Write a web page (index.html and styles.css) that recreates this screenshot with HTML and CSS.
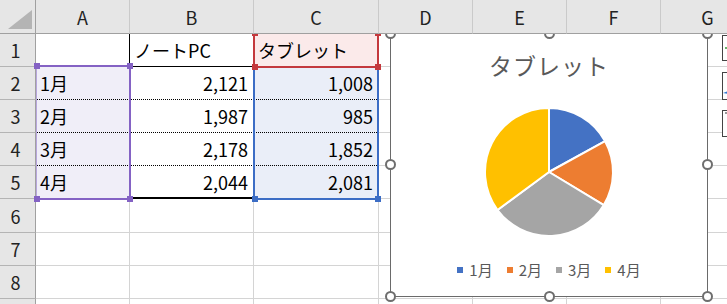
FILE: index.html
```html
<!DOCTYPE html>
<html lang="ja">
<head>
    <meta charset="UTF-8">
    <title>タブレット</title>
    <link rel="stylesheet" href="styles.css">
</head>
<body>
    <div class="sheet">
        <div class="grid">
            <div class="hd corner"></div>
            <div class="hd">A</div>
            <div class="hd">B</div>
            <div class="hd">C</div>
            <div class="hd">D</div>
            <div class="hd">E</div>
            <div class="hd">F</div>
            <div class="hd">G</div>

            <div class="rh">1</div>
            <div class="c a1"></div>
            <div class="c b1">ノートPC</div>
            <div class="c pink">タブレット</div>
            <div class="c"></div><div class="c"></div><div class="c"></div><div class="c"></div>

            <div class="rh">2</div>
            <div class="c lav dot">1月</div>
            <div class="c num dot">2,121</div>
            <div class="c num blue dot">1,008</div>
            <div class="c"></div><div class="c"></div><div class="c"></div><div class="c"></div>

            <div class="rh">3</div>
            <div class="c lav dot">2月</div>
            <div class="c num dot">1,987</div>
            <div class="c num blue dot">985</div>
            <div class="c"></div><div class="c"></div><div class="c"></div><div class="c"></div>

            <div class="rh">4</div>
            <div class="c lav dot">3月</div>
            <div class="c num dot">2,178</div>
            <div class="c num blue dot">1,852</div>
            <div class="c"></div><div class="c"></div><div class="c"></div><div class="c"></div>

            <div class="rh">5</div>
            <div class="c lav">4月</div>
            <div class="c num b5">2,044</div>
            <div class="c num blue">2,081</div>
            <div class="c"></div><div class="c"></div><div class="c"></div><div class="c"></div>

            <div class="rh">6</div>
            <div class="c"></div><div class="c"></div><div class="c"></div><div class="c"></div><div class="c"></div><div class="c"></div><div class="c"></div>
            <div class="rh">7</div>
            <div class="c"></div><div class="c"></div><div class="c"></div><div class="c"></div><div class="c"></div><div class="c"></div><div class="c"></div>
            <div class="rh">8</div>
            <div class="c"></div><div class="c"></div><div class="c"></div><div class="c"></div><div class="c"></div><div class="c"></div><div class="c"></div>
            <!-- row 9 is scrolled almost out of view -->
            <div class="rh"></div>
            <div class="c"></div><div class="c"></div><div class="c"></div><div class="c"></div><div class="c"></div><div class="c"></div><div class="c"></div>
        </div>

        <!-- selected ranges -->
        <div class="sel sel-a">
            <span class="hdl tl"></span><span class="hdl tr"></span>
            <span class="hdl bl"></span><span class="hdl br"></span>
        </div>
        <div class="sel sel-c2">
            <span class="hdl bl"></span><span class="hdl br"></span>
        </div>
        <div class="sel sel-c1">
            <span class="hdl tl"></span><span class="hdl tr"></span>
            <span class="hdl bl"></span><span class="hdl br"></span>
        </div>

        <!-- chart -->
        <div class="chart">
            <div class="chart-title">タブレット</div>
            <svg class="pie" width="316" height="160" viewBox="0 0 316 160">
                <g transform="translate(0,-49)" stroke="#fff" stroke-width="2" stroke-linejoin="round">
                    <path d="M158,139 L158,75 A64,64 0 0,1 214.1,108.2 Z" fill="#4472c4"/>
                    <path d="M158,139 L214.1,108.2 A64,64 0 0,1 212.8,172.04 Z" fill="#ed7d31"/>
                    <path d="M158,139 L212.8,172.04 A64,64 0 0,1 106.51,177 Z" fill="#a5a5a5"/>
                    <path d="M158,139 L106.51,177 A64,64 0 0,1 158,75 Z" fill="#ffc000"/>
                </g>
            </svg>
            <div class="legend">
                <span class="item"><i class="key k1"></i>1月</span>
                <span class="item"><i class="key k2"></i>2月</span>
                <span class="item"><i class="key k3"></i>3月</span>
                <span class="item"><i class="key k4"></i>4月</span>
            </div>
            <span class="ch t1"></span><span class="ch t2"></span><span class="ch t3"></span>
            <span class="ch m1"></span><span class="ch m3"></span>
            <span class="ch b1"></span><span class="ch b2"></span><span class="ch b3"></span>
        </div>

        <!-- chart side buttons -->
        <div class="tool tool-add">
            <svg width="26" height="24" viewBox="0 0 26 24"><path d="M2,12 H22 M12,2 V22" stroke="#3a9a3a" stroke-width="1.5"/></svg>
        </div>
        <div class="tool tool-style">
            <svg width="26" height="26" viewBox="0 0 26 26"><path d="M0,20 L5,18 L5,21 Z" fill="#2f77d0"/></svg>
        </div>
        <div class="tool tool-filter">
            <svg width="26" height="26" viewBox="0 0 26 26"><path d="M2,2 H12 L8,7 V12" fill="none" stroke="#333" stroke-width="1"/></svg>
        </div>
    </div>
</body>
</html>
```

FILE: styles.css
```css
* {
    margin: 0;
    padding: 0;
    box-sizing: border-box;
}

body {
    font-family: 'Noto Sans CJK JP', 'Noto Sans', sans-serif;
    background-color: #fff;
    color: #000;
    width: 727px;
    height: 304px;
    overflow: hidden;
}

.sheet {
    position: relative;
    width: 727px;
    height: 304px;
    overflow: hidden;
}

.grid {
    display: grid;
    grid-template-columns: 36px 94px 124px 125px 94px 94px 94px 94px;
    grid-template-rows: 34px repeat(5, 33px) 34px 33px 33px 33px;
    font-size: 18px;
}

.hd {
    position: relative;
    z-index: 5;
    display: flex;
    align-items: center;
    justify-content: center;
    background-color: #e6e6e6;
    color: #222;
    border-right: 1px solid #cacaca;
    border-bottom: 1px solid #a0a0a0;
}

.corner {
    border-right: 1px solid #a0a0a0;
}

.corner::after {
    content: "";
    position: absolute;
    left: 8px;
    top: 10px;
    width: 24px;
    height: 19px;
    background-color: #b4b4b4;
    clip-path: polygon(100% 0, 100% 100%, 0 100%);
}

.rh {
    display: flex;
    align-items: center;
    justify-content: center;
    padding-right: 4px;
    background-color: #e6e6e6;
    color: #222;
    border-right: 1px solid #a0a0a0;
    border-bottom: 1px solid #b4b4b4;
}

.c {
    display: flex;
    align-items: center;
    padding: 0 4px;
    white-space: nowrap;
    border-right: 1px solid #d4d4d4;
    border-bottom: 1px solid #d4d4d4;
}

.num {
    justify-content: flex-end;
    padding-right: 5px;
}

.a1 {
    border-right-color: #000;
}

.b1 {
    border-bottom-color: #000;
}

.dot {
    border-bottom: 1px dotted #000;
}

.b5 {
    border-bottom: 2px solid #000;
}

.lav {
    background-color: #f0eef8;
}

.pink {
    background-color: #fbeaea;
}

.blue {
    background-color: #eaeef8;
}

/* selection outlines */
.sel {
    position: absolute;
    z-index: 1;
    border: 2px solid;
}

.sel-a {
    left: 36px;
    top: 65px;
    width: 95px;
    height: 135px;
    border-color: #8462c4;
    border-left: 1px solid #b7a6dc;
}

.sel-c1 {
    left: 253px;
    top: 32px;
    width: 126px;
    height: 36px;
    border-color: #c4393d;
    z-index: 2;
}

.sel-c2 {
    left: 253px;
    top: 66px;
    width: 126px;
    height: 134px;
    border-color: #3c6dc5;
}

.hdl {
    position: absolute;
    width: 6px;
    height: 6px;
}

.sel-a .hdl { background-color: #8462c4; }
.sel-c1 .hdl { background-color: #c4393d; }
.sel-c2 .hdl { background-color: #3c6dc5; }

.hdl.tl { left: -3px; top: -4px; }
.hdl.tr { right: -4px; top: -4px; }
.hdl.bl { left: -3px; bottom: -4px; }
.hdl.br { right: -4px; bottom: -4px; }

/* chart */
.chart {
    position: absolute;
    z-index: 3;
    left: 390px;
    top: 33px;
    width: 318px;
    height: 264px;
    background-color: #fff;
    border: 1px solid #6a6a6a;
    display: flex;
    flex-direction: column;
    align-items: center;
}

.chart-title {
    margin-top: 15px;
    height: 32px;
    font-size: 23px;
    line-height: 32px;
    color: #595959;
    letter-spacing: 1px;
}

.pie {
    display: block;
    margin-top: 1px;
}

.legend {
    display: flex;
    gap: 14px;
    margin-top: 17px;
    font-size: 15px;
    line-height: 22px;
    color: #595959;
}

.item {
    display: flex;
    align-items: center;
    gap: 6px;
}

.key {
    width: 6px;
    height: 6px;
}

.k1 { background-color: #4472c4; }
.k2 { background-color: #ed7d31; }
.k3 { background-color: #a5a5a5; }
.k4 { background-color: #ffc000; }

.ch {
    position: absolute;
    width: 11px;
    height: 11px;
    border: 2px solid #6e6e6e;
    border-radius: 50%;
    background-color: #fff;
}

.ch.t1 { left: -6px; top: -6px; }
.ch.t2 { left: 153px; top: -6px; }
.ch.t3 { right: -6px; top: -6px; }
.ch.m1 { left: -6px; top: 125px; }
.ch.m3 { right: -6px; top: 125px; }
.ch.b1 { left: -6px; bottom: -6px; }
.ch.b2 { left: 153px; bottom: -6px; }
.ch.b3 { right: -6px; bottom: -6px; }

.tool {
    position: absolute;
    z-index: 4;
    left: 722px;
    width: 27px;
    background-color: #fff;
    border: 1px solid #444;
}

.tool-add {
    top: 35px;
    height: 26px;
}

.tool-style {
    top: 72px;
    height: 28px;
}

.tool-filter {
    top: 110px;
    height: 27px;
}
```
